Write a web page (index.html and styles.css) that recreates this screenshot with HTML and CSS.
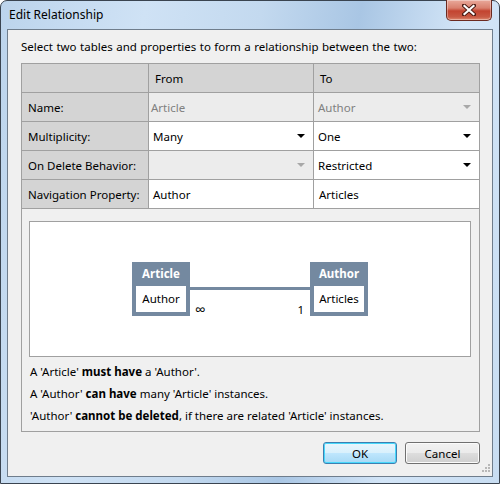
FILE: index.html
```html
<!DOCTYPE html>
<html>
<head>
<meta charset="utf-8">
<link rel="stylesheet" href="styles.css">
</head>
<body>
<div class="window">
  <div class="titlebar">
    <span class="title">Edit Relationship</span>
    <div class="close">
      <svg width="14" height="12" viewBox="0 0 14 12">
        <path d="M2 1.5 L12 10.5 M12 1.5 L2 10.5" stroke="#4a1a12" stroke-width="4" stroke-linecap="square"/>
        <path d="M2.5 2 L11.5 10 M11.5 2 L2.5 10" stroke="#ffffff" stroke-width="2.2" stroke-linecap="square"/>
      </svg>
    </div>
  </div>
  <div class="client">
    <p class="intro">Select two tables and properties to form a relationship between the two:</p>
    <div class="panel">
      <div class="grid">
        <div class="cell head"></div>
        <div class="cell head">From</div>
        <div class="cell head last">To</div>

        <div class="cell label">Name:</div>
        <div class="cell combo disabled"><span>Article</span></div>
        <div class="cell combo disabled last"><span>Author</span><i class="arrow grey"></i></div>

        <div class="cell label">Multiplicity:</div>
        <div class="cell combo"><span>Many</span><i class="arrow"></i></div>
        <div class="cell combo last"><span>One</span><i class="arrow"></i></div>

        <div class="cell label">On Delete Behavior:</div>
        <div class="cell combo disabled"><span></span><i class="arrow grey"></i></div>
        <div class="cell combo last"><span>Restricted</span><i class="arrow"></i></div>

        <div class="cell label">Navigation Property:</div>
        <div class="cell text">Author</div>
        <div class="cell text last">Articles</div>
      </div>
      <div class="diagram">
        <div class="node">
          <div class="node-head">Article</div>
          <div class="node-body">Author</div>
        </div>
        <div class="connector">
          <div class="line"></div>
          <div class="ends"><span class="inf">∞</span><span>1</span></div>
        </div>
        <div class="node">
          <div class="node-head">Author</div>
          <div class="node-body">Articles</div>
        </div>
      </div>
      <div class="notes">
        <p>A 'Article' <b>must have</b> a 'Author'.</p>
        <p>A 'Author' <b>can have</b> many 'Article' instances.</p>
        <p>'Author' <b>cannot be deleted</b>, if there are related 'Article' instances.</p>
      </div>
    </div>
    <div class="buttons">
      <button class="btn default">OK</button>
      <button class="btn">Cancel</button>
    </div>
    <svg class="grip" width="10" height="10" viewBox="0 0 10 10">
      <g fill="#b8b8b8">
        <rect x="8" y="0" width="2" height="2"/>
        <rect x="5" y="3" width="2" height="2"/><rect x="8" y="3" width="2" height="2"/>
        <rect x="2" y="6" width="2" height="2"/><rect x="5" y="6" width="2" height="2"/><rect x="8" y="6" width="2" height="2"/>
      </g>
    </svg>
  </div>
</div>
</body>
</html>
```
FILE: styles.css
```css
* { box-sizing: border-box; }
html, body { margin: 0; padding: 0; }
body {
  width: 500px;
  height: 484px;
  overflow: hidden;
  background: #ffffff;
  font-family: "Noto Sans", "Open Sans", sans-serif;
  font-size: 11.5px;
  color: #000;
}
.window {
  position: relative;
  width: 500px;
  height: 484px;
  border: 1px solid #3a4450;
  border-radius: 7px 7px 0 0;
  padding: 28px 6px 6px 6px;
  background:
    linear-gradient(100deg, #bcd4ec 0%, #cfe2f5 25%, #c3d9ef 45%, #a9c6e4 62%, #d3e5f7 80%, #c8ddf2 100%);
}
.titlebar {
  position: absolute;
  left: 0; right: 0; top: 0;
  height: 28px;
}
.title {
  position: absolute;
  left: 8px;
  top: 5px;
  font-size: 12px;
  line-height: 18px;
  color: #000;
}
.close {
  position: absolute;
  right: 7px;
  top: -1px;
  width: 46px;
  height: 21px;
  border: 1px solid #6b2a20;
  border-top: none;
  border-radius: 0 0 5px 5px;
  background: linear-gradient(#e9a99b 0%, #d9806e 40%, #c34430 55%, #c85a44 85%, #e08c72 100%);
  box-shadow: inset 0 0 0 1px rgba(255,255,255,0.35);
  display: flex;
  align-items: center;
  justify-content: center;
}
.client {
  position: relative;
  width: 486px;
  height: 448px;
  border: 1px solid #6f7d8c;
  background: #f0f0f0;
  padding: 9px 12px 0 13px;
}
.intro {
  margin: 0 0 8px 0;
  height: 16px;
  line-height: 16px;
  white-space: nowrap;
  word-spacing: 0.5px;
}
.panel {
  width: 459px;
  border: 1px solid #a0a0a0;
  background: #f0f0f0;
}
.grid {
  display: grid;
  grid-template-columns: 127px 165px 165px;
  grid-auto-rows: 29px;
}
.cell {
  border-right: 1px solid #a0a0a0;
  border-bottom: 1px solid #a0a0a0;
  display: flex;
  align-items: center;
  padding: 0 6px;
  white-space: nowrap;
}
.cell.last { border-right: none; }
.head, .label { background: #d4d4d4; }
.combo, .text { background: #ffffff; padding: 0 8px 0 4px; }
.combo span { flex: 1; }
.disabled { background: #ececec; color: #808080; padding-left: 2px; }
.disabled.last { padding-left: 4px; }
.text.last { padding-left: 5px; }
.arrow {
  width: 0; height: 0;
  border-left: 4px solid transparent;
  border-right: 4px solid transparent;
  border-top: 4px solid #000;
}
.arrow.grey { border-top-color: #a8a8a8; }
.diagram {
  margin: 12px 8px 0 7px;
  height: 136px;
  border: 1px solid #a0a0a0;
  background: #ffffff;
  display: flex;
  justify-content: center;
  align-items: center;
  padding-bottom: 1px;
}
.node {
  width: 58px;
  background: #7489a0;
  padding: 0 4px 4px 4px;
}
.node-head {
  height: 24px;
  text-align: center;
  font-weight: bold;
  color: #ffffff;
  padding-top: 2px;
  line-height: 20px;
}
.node-body {
  height: 26px;
  line-height: 26px;
  background: #ffffff;
  text-align: center;
}
.connector {
  width: 120px;
  height: 54px;
}
.line {
  margin-top: 25px;
  height: 3px;
  background: #7489a0;
}
.ends {
  margin-top: 12px;
  display: flex;
  justify-content: space-between;
  align-items: flex-end;
  padding: 0 6px 0 5px;
  line-height: 15px;
}
.inf {
  font-size: 15px;
  line-height: 15px;
}
.notes {
  padding: 4px 8px 4px 8px;
}
.notes p {
  margin: 0;
  height: 22px;
  line-height: 22px;
  white-space: nowrap;
}
.buttons {
  margin-top: 10px;
  display: flex;
  justify-content: flex-end;
  gap: 8px;
  width: 459px;
}
.btn {
  font-family: inherit;
  font-size: 11.5px;
  height: 22px;
  width: 75px;
  border: 1px solid #707070;
  border-radius: 3px;
  background: linear-gradient(#f2f2f2 0%, #ebebeb 48%, #dddddd 52%, #cfcfcf 100%);
  box-shadow: inset 0 0 0 1px #fbfbfb;
  color: #000;
  padding: 0;
}
.btn.default {
  width: 74px;
  border-color: #3c7fb1;
  background: linear-gradient(#eaf6fd 0%, #d9f0fc 48%, #bee6fd 52%, #a7d9f5 100%);
  box-shadow: inset 0 0 0 1px #48d8fb;
}
.grip {
  position: absolute;
  right: 2px;
  bottom: 2px;
}
```
